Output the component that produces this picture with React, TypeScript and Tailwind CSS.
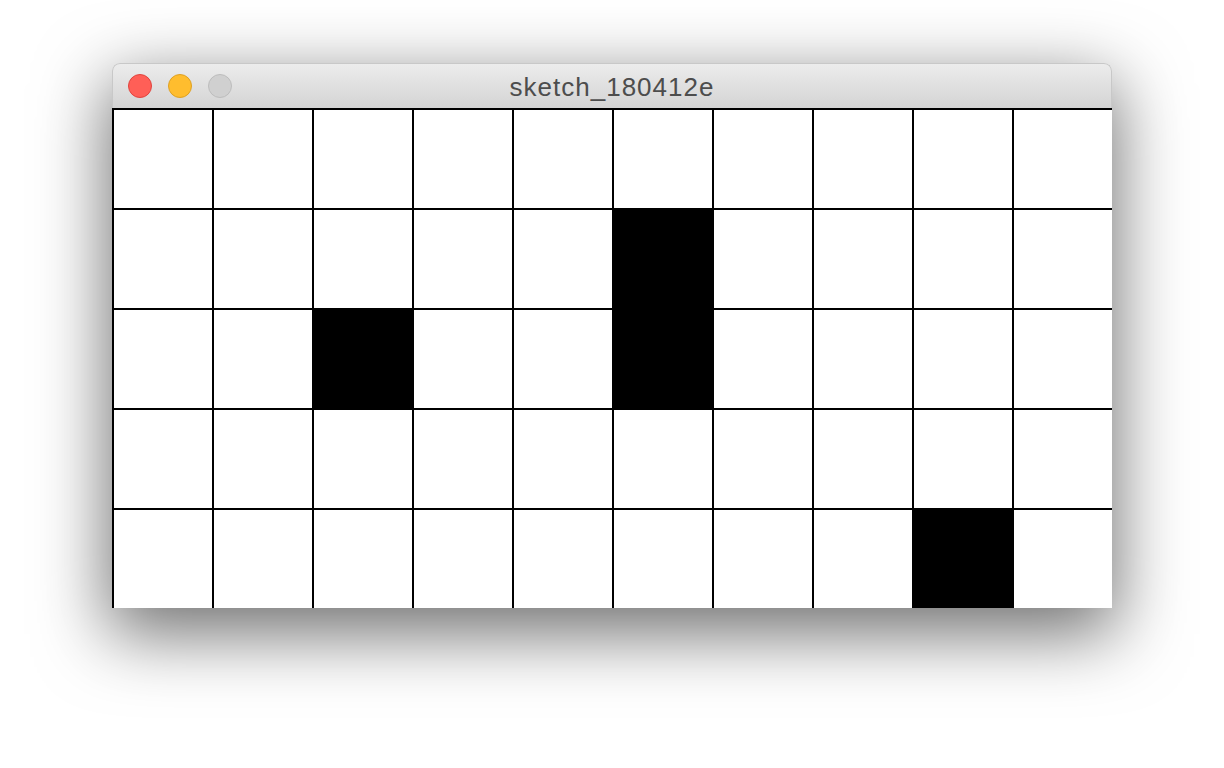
const filled = [
  [5, 1],
  [2, 2],
  [5, 2],
  [8, 4],
]

function isFilled(col: number, row: number) {
  return filled.some(([c, r]) => c === col && r === row)
}

export default function App() {
  const rows = [0, 1, 2, 3, 4]
  const cols = [0, 1, 2, 3, 4, 5, 6, 7, 8, 9]

  return (
    <div className="w-[1224px] h-[768px] bg-white pt-[63px] overflow-hidden">
      <div className="w-[1000px] mx-auto rounded-t-[8px] shadow-[0_22px_70px_4px_rgba(0,0,0,0.56)]">
        {/* title bar */}
        <div className="relative h-[45px] rounded-t-[8px] border border-b-0 border-[#c8c8c8] bg-gradient-to-b from-[#ececec] to-[#d4d4d4] flex items-center justify-center">
          <div className="absolute left-[15px] top-[10px] flex gap-[16px]">
            <span className="w-[24px] h-[24px] rounded-full bg-[#ff5f57] border border-[#e0443e]" />
            <span className="w-[24px] h-[24px] rounded-full bg-[#ffbd2e] border border-[#dea123]" />
            <span className="w-[24px] h-[24px] rounded-full bg-[#d0d0d0] border border-[#bdbdbd]" />
          </div>
          <span className="text-[26px] leading-none text-[#4d4d4d] font-['Liberation_Sans',Arial,sans-serif] tracking-[1px] mt-[2px]">
            sketch_180412e
          </span>
        </div>

        {/* canvas */}
        <div className="grid grid-cols-[repeat(10,100px)] grid-rows-[repeat(5,100px)] bg-white">
          {rows.map((r) =>
            cols.map((c) => (
              <div
                key={`${c}-${r}`}
                className={`box-border border-l-2 border-t-2 border-black ${isFilled(c, r) ? "bg-black" : "bg-white"}`}
              />
            ))
          )}
        </div>
      </div>
    </div>
  )
}
